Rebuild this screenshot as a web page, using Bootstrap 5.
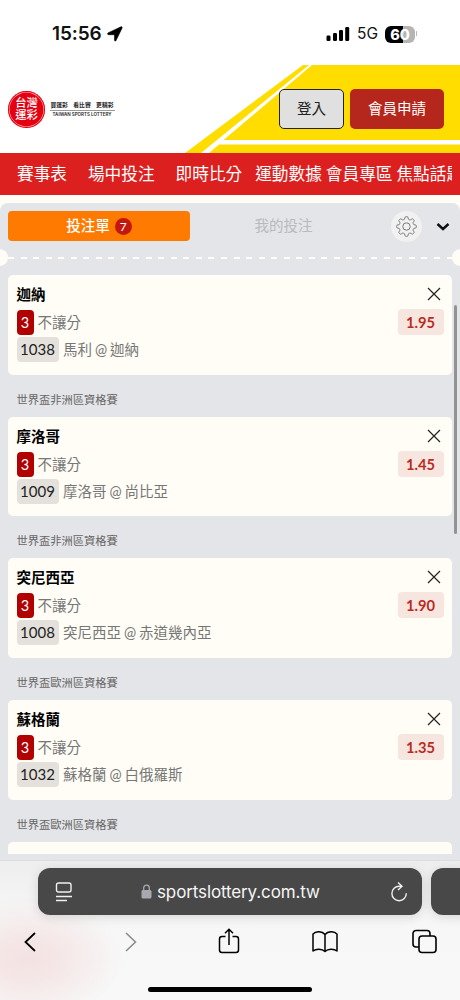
<!DOCTYPE html>
<html lang="zh-Hant">
<head>
<meta charset="utf-8">
<meta name="viewport" content="width=device-width, initial-scale=1">
<title>台灣運彩</title>
<link rel="stylesheet" href="https://cdn.jsdelivr.net/npm/bootstrap@5.3.0/dist/css/bootstrap.min.css">
<style>
body{width:460px;height:1000px;overflow:hidden;background:#fffdf5;font-family:Lato,"Noto Sans CJK TC",sans-serif;font-size:14.5px;line-height:1.2;color:#111}
svg{display:block;flex:none}
.status{height:65px;padding:3px 43px 0 52px;font-family:Inter,sans-serif;background:#fff}
.clock{font-size:19px;font-weight:600;letter-spacing:-.1px}
.net{font-size:15.5px;margin:1px 7px 0 7px}
.battery{width:30px;height:17px;border-radius:6px;background:linear-gradient(90deg,#000 60%,#b5b5b5 60%);color:#fff;font-size:14.5px;font-weight:800;line-height:17px}
.sitehead{height:88px;padding:0 16px 0 8px;background:#fff}
.stripes{left:0;top:0}
.seal{width:37px;height:37px;border-radius:50%;background:#e50012;box-shadow:inset 0 0 0 1px #e50012,inset 0 0 0 1.6px #ffb0b0;color:#fff;font-size:11.3px;font-weight:500;line-height:11.6px}
.slogan{width:65px;margin-left:4.5px;color:#222}
.slogan-zh{font-size:5.8px;font-weight:700;line-height:8px;border-bottom:1px solid #999;padding:1px 1px 1px}
.slogan-en{font:600 4.5px/8px Inter,sans-serif;white-space:nowrap}
.hbtn{height:40px;padding:0;border-radius:5px;font-size:14.5px;line-height:1}
.login{width:65px;background:#e0e0e0;border:1px solid #222;color:#222}
.join{width:94px;background:#b5261c;color:#fff;border:0}
.mainnav{height:42px;padding:0 0 0 17px;margin-right:8px;font-size:16.67px;color:#fff;white-space:nowrap}
.navwrap{background:#dc1f1f}
.slip{height:657px;margin-top:8px;border-radius:8px 8px 0 0;background:#e4e5e8}
.tabs{height:54px;padding:8px 8px 0}
.tab-on{width:182px;height:30px;background:#ff7a00;color:#fff;font-weight:500;border-radius:4px}
.count{width:17px;height:17px;border-radius:50%;background:#c3180f;font-size:12px;margin-left:5px;line-height:17px}
.tab-off{width:187px;height:30px;color:#b9babc}
.gear{width:31px;height:31px;border-radius:50%;background:#f1f1f1;margin-left:14px}
.perf{height:1px}
.dash{left:8px;right:8px;top:0;height:2px;background:repeating-linear-gradient(90deg,#fffdf5 0 6px,transparent 6px 12.53px)}
.notch{width:17px;height:17px;border-radius:50%;background:#fffdf5;top:-8px}
.list{height:579px;margin-top:17px;padding:0 8px;overflow:hidden}
.bet{height:99.67px;background:#fffdf5;border-radius:5px;padding:10px 8.5px 0 8.5px}
.team{font-size:14.5px;font-weight:700;height:19px;line-height:19px;color:#000}
.league{height:42px;padding:6px 8.5px 0;font-size:11.25px;line-height:38px;color:#666}
.chip{height:25px;border-radius:4px;line-height:25px}
.pick{width:17px;background:#b00000;color:#fff;font-size:14.5px;margin-top:1px}
.code{width:42px;background:#e4e1dc;color:#222;font-size:15px}
.dim{color:#777;line-height:25px;white-space:pre;word-spacing:-.8px}
.odds{width:46px;height:26px;line-height:27px;border-radius:4px;background:#f7e6e0;color:#b92c1f;font-weight:700;font-size:14.7px}
.thumb{left:454px;top:305px;width:3px;height:229px;border-radius:2px;background:#929395}
.safari{height:140px;border-top:1px solid #dcdde0;background:radial-gradient(ellipse 95px 62px at 28px 98px,#f4e2e2,#f5e7e7 35%,transparent),linear-gradient(#eeeeef,#f7f7f7 60px,#f8f8f8);font-family:Inter,sans-serif;overflow:hidden}
.urlrow{padding:7px 0 0 38px;gap:9px}
.urlbar{width:384px;height:47px;border-radius:12px;background:#484848;color:#f5f5f5;box-shadow:0 2px 12px #0002;flex:none;padding:0 14px 0 17px}
.nexttab{width:50px;height:47px;border-radius:12px;background:#484848;box-shadow:0 2px 12px #0002;flex:none}
.url{font-size:17px;letter-spacing:-.12px;margin:2px 0 0 5px}
.tools{height:54px;padding:0 23px 0 23px}
.home{width:164px;height:5px;border-radius:3px;background:#000;margin:18px 0 0 148px}
</style>
</head>
<body>
<div class="status d-flex align-items-center">
  <span class="clock">15:56</span>
  <svg style="margin-left:5px" width="16" height="16" viewBox="0 0 16 16"><path stroke="#000" stroke-width=".6" d="M1 6.900 14 .8c.8-.3 1.400.3 1.100 1.100L9 14.600c-.4.8-1.500.6-1.500-.3V8.700H1.500C.5 8.700.2 7.300 1 6.900z"/></svg>
  <svg class="ms-auto" width="24" height="16" viewBox="0 0 24 16"><rect x=".5" y="9.5" width="4" height="5.5" rx="1.2"/><rect x="7" y="7" width="4" height="8" rx="1.2"/><rect x="13" y="4" width="4" height="11" rx="1.2"/><rect x="19.2" y="1" width="4" height="14" rx="1.2"/></svg>
  <span class="net">5G</span>
  <span class="battery text-center">60</span>
  <svg width="2" height="6"><rect x="1" width="1.5" height="5" rx=".7" fill="#b5b5b5"/></svg>
</div>
<header class="sitehead position-relative d-flex align-items-center">
  <svg class="stripes position-absolute" width="460" height="88" viewBox="0 0 460 88"><path fill="#ffdd00" d="M303 0H460V88H185z"/><path fill="#fff" d="M309 0h3L223.500 75H460v4.500H219L209 88h-8z"/></svg>
  <div class="seal position-relative d-flex flex-column align-items-center justify-content-center"><span>台灣</span><span>運彩</span></div>
  <div class="slogan position-relative"><div class="slogan-zh d-flex justify-content-between"><span>買運彩</span><span>看比賽</span><span>更精彩</span></div><div class="slogan-en text-center">TAIWAN SPORTS LOTTERY</div></div>
  <button class="btn hbtn login position-relative ms-auto">登入</button>
  <button class="btn hbtn join position-relative" style="margin-left:6px">會員申請</button>
</header>
<nav class="navwrap"><div class="mainnav d-flex align-items-center overflow-hidden">
  <span>賽事表</span><span style="margin-left:21px">場中投注</span><span style="margin-left:21px">即時比分</span><span style="margin-left:13px">運動數據</span><span style="margin-left:4px">會員專區</span><span style="margin-left:4px">焦點話題</span>
</div></nav>
<main class="slip overflow-hidden">
  <div class="tabs d-flex">
    <div class="tab-on d-flex align-items-center justify-content-center">投注單<span class="count text-center">7</span></div>
    <div class="tab-off d-flex align-items-center justify-content-center">我的投注</div>
    <div class="gear d-flex align-items-center justify-content-center"><svg width="23" height="23" viewBox="-11.500 -11.500 23 23" fill="none" stroke="#777" stroke-width="1"><circle r="3.700"/><path id="cog"/></svg></div>
    <svg style="margin:11px 0 0 14px" width="14" height="10" viewBox="0 0 14 10" fill="none" stroke="#111" stroke-width="2.500"><path d="m1.500 2 5.500 5 5.500-5"/></svg>
  </div>
  <div class="perf position-relative"><div class="dash position-absolute"></div><div class="notch position-absolute" style="left:-9px"></div><div class="notch position-absolute" style="right:-9px"></div></div>
  <div class="list" id="bets"></div>
</main>
<div class="thumb position-absolute"></div>
<footer class="safari">
  <div class="urlrow d-flex">
    <div class="urlbar d-flex align-items-center">
      <svg width="18" height="20" viewBox="0 0 18 20" fill="none" stroke="#f0f0f0" stroke-width="1.400"><rect x="1.500" y="1" width="14.500" height="9" rx="2"/><path d="M1 14.500h16M1 18.500h11"/></svg>
      <svg style="margin-left:68px" width="11" height="15" viewBox="0 0 11 15"><rect x=".5" y="6" width="10" height="8.500" rx="1.500" fill="#a9a8b0"/><path d="M2.700 6.500V4a2.800 2.800 0 0 1 5.600 0v2.500" fill="none" stroke="#a9a8b0" stroke-width="1.300"/></svg>
      <span class="url">sportslottery.com.tw</span>
      <svg class="ms-auto" width="18" height="20" viewBox="0 0 18 20" fill="none" stroke="#f0f0f0" stroke-width="1.400"><path d="M11.500 4.300H9.300A7.200 7.200 0 1 0 16.300 11.300M8 .6l4 3.700-4 3.800"/></svg>
    </div>
    <div class="nexttab"></div>
  </div>
  <div class="tools d-flex align-items-center justify-content-between">
    <svg width="14" height="20" viewBox="0 0 14 20" fill="none" stroke="#000" stroke-width="1.800"><path d="M12 1 2.500 10 12 19"/></svg>
    <svg style="margin-left:37px" width="14" height="20" viewBox="0 0 14 20" fill="none" stroke="#888" stroke-width="1.500"><path d="m2 1 9.500 9L2 19"/></svg>
    <svg style="margin-left:30px;margin-top:-2px" width="22" height="26" viewBox="0 0 22 26" fill="none" stroke="#000" stroke-width="1.500"><path d="M7.500 8.500H4a2.500 2.500 0 0 0-2.500 2.500v11A2.500 2.500 0 0 0 4 24.500h14a2.500 2.500 0 0 0 2.500-2.500V11A2.500 2.500 0 0 0 18 8.500h-3.500M11 17V1.500M7 5.300l4-4 4 4"/></svg>
    <svg style="margin-left:23px" width="26" height="22" viewBox="0 0 26 22" fill="none" stroke="#000" stroke-width="1.500" stroke-linejoin="round"><path d="M13 3.500C10-.1 4-.1 1 3v17c3-2.500 9-2.500 12 .5 3-3 9-3 12-.5V3c-3-3.100-9-3.100-12 .5zv17"/></svg>
    <svg style="margin-left:24px;margin-top:-2px" width="25" height="25" viewBox="0 0 25 25" fill="none" stroke="#000" stroke-width="1.600"><rect x="7" y="7" width="17" height="16.500" rx="3"/><path d="M7 18H4a3 3 0 0 1-3-3V4.500a3 3 0 0 1 3-3h11a3 3 0 0 1 3 3V7"/></svg>
  </div>
  <div class="home"></div>
</footer>
<script src="https://cdn.jsdelivr.net/npm/bootstrap@5.3.0/dist/js/bootstrap.bundle.min.js"></script>
<script>
const bets=[
 ['迦納','1038','馬利 @ 迦納','1.95','世界盃非洲區資格賽'],
 ['摩洛哥','1009','摩洛哥 @ 尚比亞','1.45','世界盃非洲區資格賽'],
 ['突尼西亞','1008','突尼西亞 @ 赤道幾內亞','1.90','世界盃歐洲區資格賽'],
 ['蘇格蘭','1032','蘇格蘭 @ 白俄羅斯','1.35','世界盃歐洲區資格賽']];
const close='<svg width="14" height="14" viewBox="0 0 14 14" stroke="#222" stroke-width="1.2" style="margin:2px 3px 0 0"><path d="M1 1l12 12M13 1 1 13"/></svg>';
document.getElementById('bets').innerHTML=bets.map(b=>`<article class="bet">
<div class="team d-flex justify-content-between"><span>${b[0]}</span>${close}</div>
<div class="d-flex" style="height:27px;padding-top:5px"><span class="chip pick text-center">3</span><span class="dim" style="margin:1px 0 0 4px">不讓分</span><span class="odds text-center ms-auto">${b[3]}</span></div>
<div class="d-flex" style="margin-top:6px"><span class="chip code text-center">${b[1]}</span><span class="dim" style="margin-left:4.500px">${b[2]}</span></div>
</article><div class="league">${b[4]}</div>`).join('')+`<article class="bet"><div class="team d-flex justify-content-end">${close}</div></article>`;
// gear outline: eight rounded teeth around the hub
let d='';
for(let i=0;i<=128;i++){const t=i/128*2*Math.PI,r=8.6+1.3*Math.tanh(2.2*Math.cos(8*t));d+=(i?'L':'M')+(r*Math.cos(t)).toFixed(2)+' '+(r*Math.sin(t)).toFixed(2);}
document.getElementById('cog').setAttribute('d',d+'Z');
</script>
</body>
</html>
